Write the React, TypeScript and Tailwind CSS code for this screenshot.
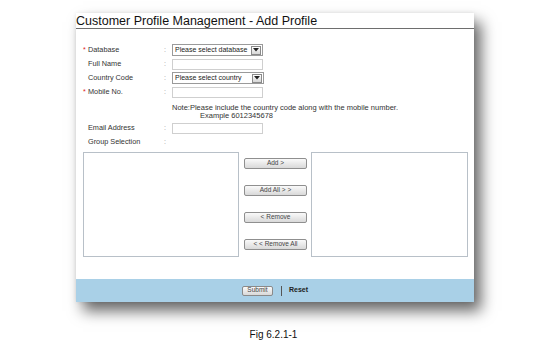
import React from 'react';

const font = { fontFamily: '"Liberation Sans", Arial, sans-serif' };

const Arrow = () => (
  <span className="ml-auto mr-[1px] flex h-[9px] w-[10px] items-center justify-center border border-[#8a8a8a] bg-gradient-to-b from-white to-[#d6d6d6]">
    <svg width="6" height="4" viewBox="0 0 6 4">
      <path d="M0 0 L6 0 L3 3.5 Z" fill="#222" />
    </svg>
  </span>
);

const FakeSelect = ({ label, width }: { label: string; width: string }) => (
  <div className={`flex h-[12px] ${width} items-center border border-[#9a9a9a] bg-white pl-[2px] text-[7px] text-[#222]`}>
    <span className="whitespace-nowrap">{label}</span>
    <Arrow />
  </div>
);

const TextBox = () => <div className="h-[11px] w-[91px] border border-[#cfcfcf] bg-white" />;

const Row = ({ label, required, children }: { label: string; required?: boolean; children?: React.ReactNode }) => (
  <div className="flex h-[14px] items-center">
    <span className="w-[5px] text-[7px] text-[#e02020]">{required ? '*' : ''}</span>
    <span className="w-[76px] text-[7.3px] text-[#333]">{label}</span>
    <span className="w-[8px] text-[7px] text-[#999]">:</span>
    {children}
  </div>
);

const MoveButton = ({ label }: { label: string }) => (
  <button className="h-[11px] w-[63px] rounded-[2px] border border-[#8f8f8f] bg-gradient-to-b from-[#fafafa] to-[#d9d9d9] text-[6.5px] leading-none text-[#444]">
    {label}
  </button>
);

export default function App() {
  return (
    <div className="h-[350px] w-[547px] bg-white" style={font}>
      <div className="pl-[76px] pt-[13px]">
        <div className="flex h-[289px] w-[398px] flex-col bg-white shadow-[7px_9px_14px_rgba(0,0,0,0.6),0_0_4px_rgba(0,0,0,0.08)]">
          <div className="h-[16px] border-b border-[#6e6e6e] pt-[1px] text-[12.5px] leading-[14px] text-[#111]">
            Customer Profile Management - Add Profile
          </div>
          <div className="pl-[7px] pt-[14px]">
            <Row label="Database" required>
              <FakeSelect label="Please select database" width="w-[91px]" />
            </Row>
            <Row label="Full Name">
              <TextBox />
            </Row>
            <Row label="Country Code">
              <FakeSelect label="Please select country" width="w-[92px]" />
            </Row>
            <Row label="Mobile No." required>
              <TextBox />
            </Row>
            <div className="mt-[5px] pl-[89px] text-[7.5px] leading-[8px] text-[#333]">
              <div>Note:Please include the country code along with the mobile number.</div>
              <div className="pl-[28px]">Example 6012345678</div>
            </div>
            <div className="mt-[1px]">
              <Row label="Email Address">
                <TextBox />
              </Row>
              <Row label="Group Selection" />
            </div>
            <div className="mt-[3px] flex">
              <div className="h-[105px] w-[156px] border border-[#b8c0c8] bg-white" />
              <div className="ml-[5px] flex flex-col gap-[16px] pt-[6px]">
                <MoveButton label="Add  >" />
                <MoveButton label="Add All > >" />
                <MoveButton label="< Remove" />
                <MoveButton label="< < Remove All" />
              </div>
              <div className="ml-[4px] h-[105px] w-[157px] border border-[#b8c0c8] bg-white" />
            </div>
          </div>
          <div className="mt-auto flex h-[23px] items-center justify-center bg-[#a9d0e7]">
            <button className="h-[10px] w-[31px] rounded-[2px] border border-[#8a8a8a] bg-gradient-to-b from-[#fafafa] to-[#d8d8d8] text-[6.5px] leading-none text-[#444]">
              Submit
            </button>
            <span className="ml-[8px] h-[10px] w-px bg-[#555]" />
            <span className="ml-[7px] text-[7px] font-bold text-[#222]">Reset</span>
          </div>
        </div>
      </div>
      <div className="mt-[25px] text-center text-[10px] text-[#111]">Fig 6.2.1-1</div>
    </div>
  );
}
